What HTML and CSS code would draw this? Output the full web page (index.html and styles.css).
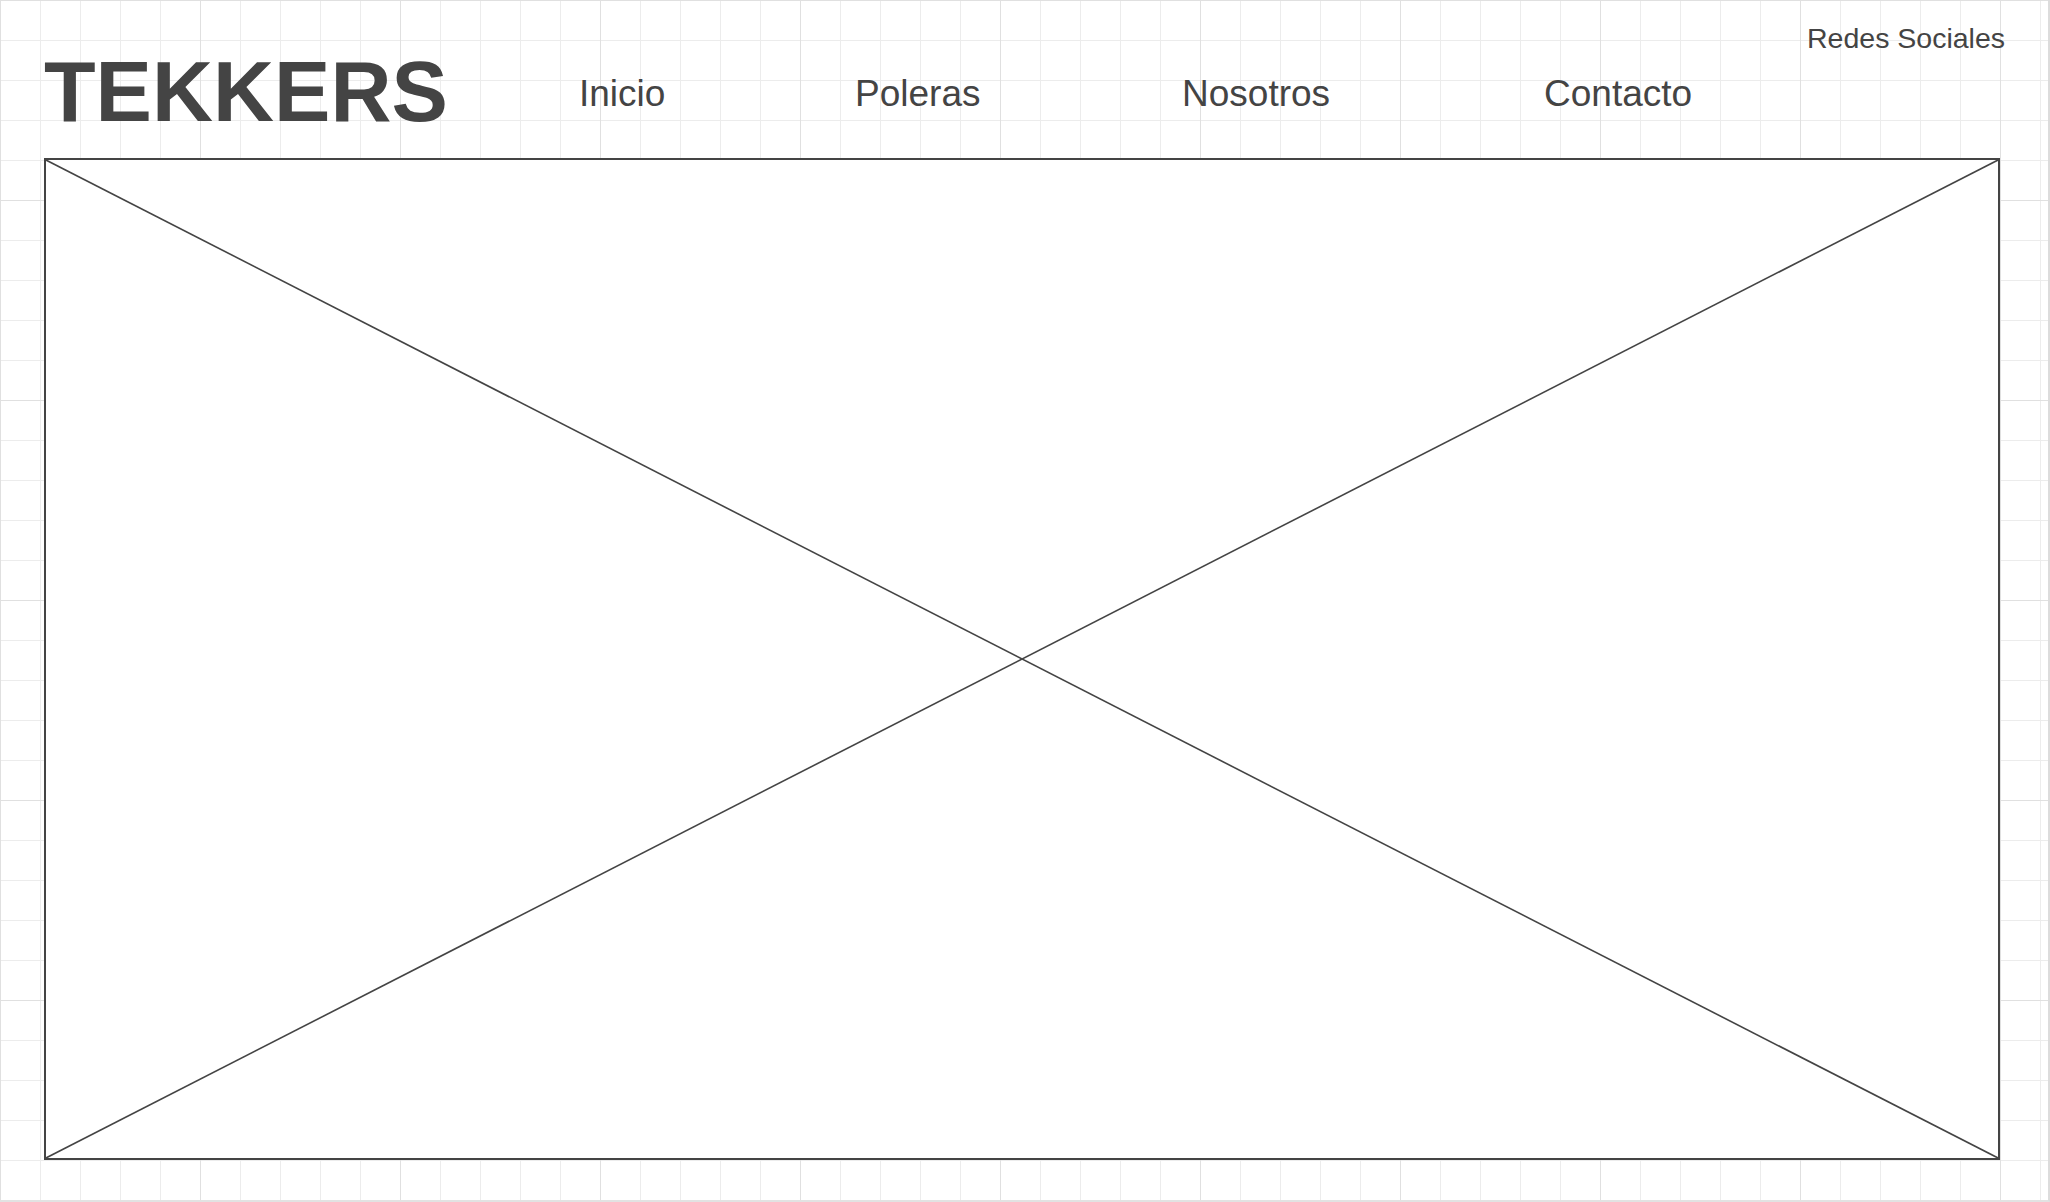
FILE: index.html
```html
<!DOCTYPE html>
<html lang="es">
<head>
<meta charset="utf-8">
<title>TEKKERS</title>
<link rel="stylesheet" href="styles.css">
</head>
<body>
<div class="canvas">
  <header class="header">
    <div class="logo">TEKKERS</div>
    <a class="nav-item">Inicio</a>
    <a class="nav-item">Poleras</a>
    <a class="nav-item">Nosotros</a>
    <a class="nav-item">Contacto</a>
    <div class="social">Redes Sociales</div>
  </header>
  <div class="placeholder">
    <svg class="cross" viewBox="0 0 100 100" preserveAspectRatio="none">
      <line x1="0" y1="0" x2="100" y2="100" vector-effect="non-scaling-stroke"/>
      <line x1="100" y1="0" x2="0" y2="100" vector-effect="non-scaling-stroke"/>
    </svg>
  </div>
</div>
</body>
</html>
```

FILE: styles.css
```css
html, body {
  margin: 0;
  padding: 0;
  background: #ffffff;
}

body {
  width: 2050px;
  height: 1202px;
  overflow: hidden;
  font-family: "Liberation Sans", Arial, sans-serif;
  color: #444444;
}

.canvas {
  width: 2048px;
  height: 1200px;
  border-right: 2px solid #dcdcdc;
  border-bottom: 2px solid #e2e2e2;
  background-color: #ffffff;
  background-image:
    linear-gradient(to right, #e0e0e0 1px, transparent 1px),
    linear-gradient(to bottom, #e0e0e0 1px, transparent 1px),
    linear-gradient(to right, #ececec 1px, transparent 1px),
    linear-gradient(to bottom, #ececec 1px, transparent 1px);
  background-size: 200px 200px, 200px 200px, 40px 40px, 40px 40px;
  display: flex;
  flex-direction: column;
}

.header {
  height: 158px;
  padding-left: 44px;
  display: grid;
  grid-template-columns: 535px 276px 327px 362px 263px auto;
  align-items: start;
}

.logo {
  font-size: 84.5px;
  font-weight: 700;
  line-height: 1;
  margin-top: 50px;
  white-space: nowrap;
}

.nav-item {
  font-size: 37px;
  line-height: 1;
  margin-top: 75px;
  color: #444444;
  text-decoration: none;
  white-space: nowrap;
}

.social {
  font-size: 28.5px;
  line-height: 1;
  margin-top: 24px;
  white-space: nowrap;
}

.placeholder {
  margin-left: 44px;
  width: 1956px;
  height: 1002px;
  box-sizing: border-box;
  border: 2px solid #444444;
  background: #ffffff;
}

.cross {
  display: block;
  width: 100%;
  height: 100%;
}

.cross line {
  stroke: #444444;
  stroke-width: 1.6;
}
```
